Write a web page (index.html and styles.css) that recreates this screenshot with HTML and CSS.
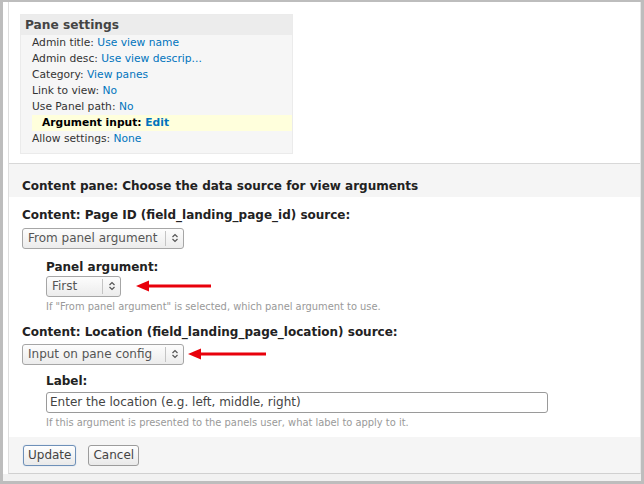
FILE: index.html
```html
<!DOCTYPE html>
<html lang="en">
<head>
  <meta charset="UTF-8">
  <title>Pane settings</title>
  <link rel="stylesheet" href="styles.css">
</head>
<body>

<div class="frame">
  <div class="dialog">

    <!-- Pane settings summary -->
    <div class="summary">
      <div class="pane-box">
        <h2>Pane settings</h2>
        <ul class="pane-list">
          <li>Admin title: <a href="#">Use view name</a></li>
          <li>Admin desc: <a href="#">Use view descrip...</a></li>
          <li>Category: <a href="#">View panes</a></li>
          <li>Link to view: <a href="#">No</a></li>
          <li>Use Panel path: <a href="#">No</a></li>
          <li class="current">Argument input: <a href="#">Edit</a></li>
          <li>Allow settings: <a href="#">None</a></li>
        </ul>
      </div>
    </div>

    <!-- Argument form -->
    <form class="arg-form">
      <div class="form-title">Content pane: Choose the data source for view arguments</div>

      <div class="form-body">
        <div class="form-item">
          <label>Content: Page ID (field_landing_page_id) source:</label>
          <div class="select wide">
            <select><option>From panel argument</option></select>
            <span class="arrow"><svg width="8" height="12" viewBox="0 0 8 12"><path d="M1.5 5 L4 2.5 L6.5 5 M1.5 7 L4 9.5 L6.5 7" fill="none" stroke="#555" stroke-width="1.2"/></svg></span>
          </div>
        </div>

        <div class="form-item sub">
          <label>Panel argument:</label>
          <div class="row">
            <div class="select small">
              <select><option>First</option></select>
              <span class="arrow"><svg width="8" height="12" viewBox="0 0 8 12"><path d="M1.5 5 L4 2.5 L6.5 5 M1.5 7 L4 9.5 L6.5 7" fill="none" stroke="#555" stroke-width="1.2"/></svg></span>
            </div>
            <svg class="pointer far" width="75" height="12" viewBox="0 0 75 12"><path d="M11 6 H75" stroke="#e8000b" stroke-width="3"/><path d="M0 6 L13 0.5 L13 11.5 Z" fill="#e8000b"/></svg>
          </div>
          <div class="description">If "From panel argument" is selected, which panel argument to use.</div>
        </div>

        <div class="form-item">
          <label>Content: Location (field_landing_page_location) source:</label>
          <div class="row">
            <div class="select wide">
              <select><option>Input on pane config</option></select>
              <span class="arrow"><svg width="8" height="12" viewBox="0 0 8 12"><path d="M1.5 5 L4 2.5 L6.5 5 M1.5 7 L4 9.5 L6.5 7" fill="none" stroke="#555" stroke-width="1.2"/></svg></span>
            </div>
            <svg class="pointer near" width="78" height="12" viewBox="0 0 78 12"><path d="M11 6 H78" stroke="#e8000b" stroke-width="3"/><path d="M0 6 L13 0.5 L13 11.5 Z" fill="#e8000b"/></svg>
          </div>
        </div>

        <div class="form-item sub label-item">
          <label>Label:</label>
          <input type="text" class="text-input" value="Enter the location (e.g. left, middle, right)">
          <div class="description">If this argument is presented to the panels user, what label to apply to it.</div>
        </div>
      </div>

      <div class="form-actions">
        <button type="button" class="btn focused">Update</button>
        <button type="button" class="btn">Cancel</button>
      </div>
    </form>

  </div>
  <div class="under"></div>
</div>

</body>
</html>
```

FILE: styles.css
```css
body {
  margin: 0;
  font-family: "DejaVu Sans", Verdana, sans-serif;
  color: #333;
  background: #fff;
}

a {
  color: #0074bd;
  text-decoration: none;
}

.frame {
  width: 644px;
  height: 484px;
  box-sizing: border-box;
  border: 3px solid #bdbdbd;
  border-top-width: 2px;
  display: flex;
  flex-direction: column;
  background: #fff;
}

.dialog {
  margin-left: 5px;
  border-left: 1px solid #dedede;
  border-right: 1px solid #e6e6e6;
  border-bottom: 1px solid #d0d0d0;
}

.under {
  flex: 1;
  background: #f1f1f1;
}

/* summary */
.summary {
  height: 162px;
  box-sizing: border-box;
  padding: 12px 0 0 11px;
  border-bottom: 1px solid #d8d8d8;
}

.pane-box {
  width: 273px;
  box-sizing: border-box;
  background: #f6f6f6;
  border: 1px solid #ebebeb;
  padding-bottom: 6px;
}

.pane-box h2 {
  margin: 0;
  height: 20px;
  line-height: 20px;
  padding-left: 4px;
  font-size: 12.2px;
  color: #444;
  background: #ececec;
}

.pane-list {
  list-style: none;
  margin: 0;
  padding: 0 0 0 11px;
  font-size: 10.7px;
  line-height: 16px;
  color: #333;
}

.pane-list li.current {
  background: #ffffdc;
  padding-left: 10px;
  font-weight: bold;
  color: #000;
}

/* form */
.arg-form {
  margin: 0;
}

.form-title {
  height: 33px;
  box-sizing: border-box;
  padding: 14px 13px 0;
  line-height: 16px;
  font-size: 12px;
  font-weight: bold;
  color: #222;
  background: #f5f5f5;
}

.form-body {
  padding: 0 13px 7px;
}

.form-item {
  margin-top: 10px;
}

.form-item label {
  display: block;
  font-size: 12px;
  font-weight: bold;
  line-height: 16px;
  color: #222;
  margin-bottom: 4px;
}

.form-item.sub {
  padding-left: 24px;
}

.form-item.sub label {
  margin-bottom: 1px;
}

.label-item {
  margin-top: 8px;
}

.form-item.label-item label {
  margin-bottom: 3px;
}

.row {
  display: flex;
  align-items: center;
}

.select {
  display: inline-flex;
  align-items: stretch;
  height: 21px;
  box-sizing: border-box;
  border: 1px solid #a6a6a6;
  border-radius: 3px;
  background: linear-gradient(#fdfdfd, #ececec);
  overflow: hidden;
}

.select select {
  appearance: none;
  -webkit-appearance: none;
  border: none;
  background: transparent;
  font-family: "DejaVu Sans", sans-serif;
  font-size: 12px;
  color: #555;
  padding: 0 0 0 5px;
  margin: 0;
  flex: 1;
}

.select .arrow {
  width: 17px;
  display: flex;
  align-items: center;
  justify-content: center;
  border-left: 1px solid #c4c4c4;
  margin: 2px 0;
}

.select.wide {
  width: 162px;
}

.select.small {
  width: 75px;
}

.pointer.far {
  margin-left: 15px;
}

.pointer.near {
  margin-left: 4px;
}

.description {
  margin-top: 3px;
  font-size: 9.9px;
  line-height: 14px;
  color: #999;
}

.text-input {
  display: block;
  width: 502px;
  height: 21px;
  box-sizing: border-box;
  border: 1px solid #9a9a9a;
  border-radius: 3px;
  padding: 0 3px;
  font-family: "DejaVu Sans", sans-serif;
  font-size: 12px;
  color: #444;
  background: #fff;
}

.form-actions {
  height: 36px;
  box-sizing: border-box;
  padding: 8px 13px 0 14px;
  background: #f5f5f5;
  display: flex;
  align-items: flex-start;
  gap: 12px;
}

.btn {
  height: 21px;
  padding: 0 4px;
  font-family: "DejaVu Sans", sans-serif;
  font-size: 12px;
  color: #444;
  border: 1px solid #9c9c9c;
  border-radius: 3px;
  background: linear-gradient(#fefefe, #e9e9e9);
  cursor: pointer;
}

.btn.focused {
  border-color: #6e90b8;
  box-shadow: 0 0 1px #9bb7d9;
}
```
